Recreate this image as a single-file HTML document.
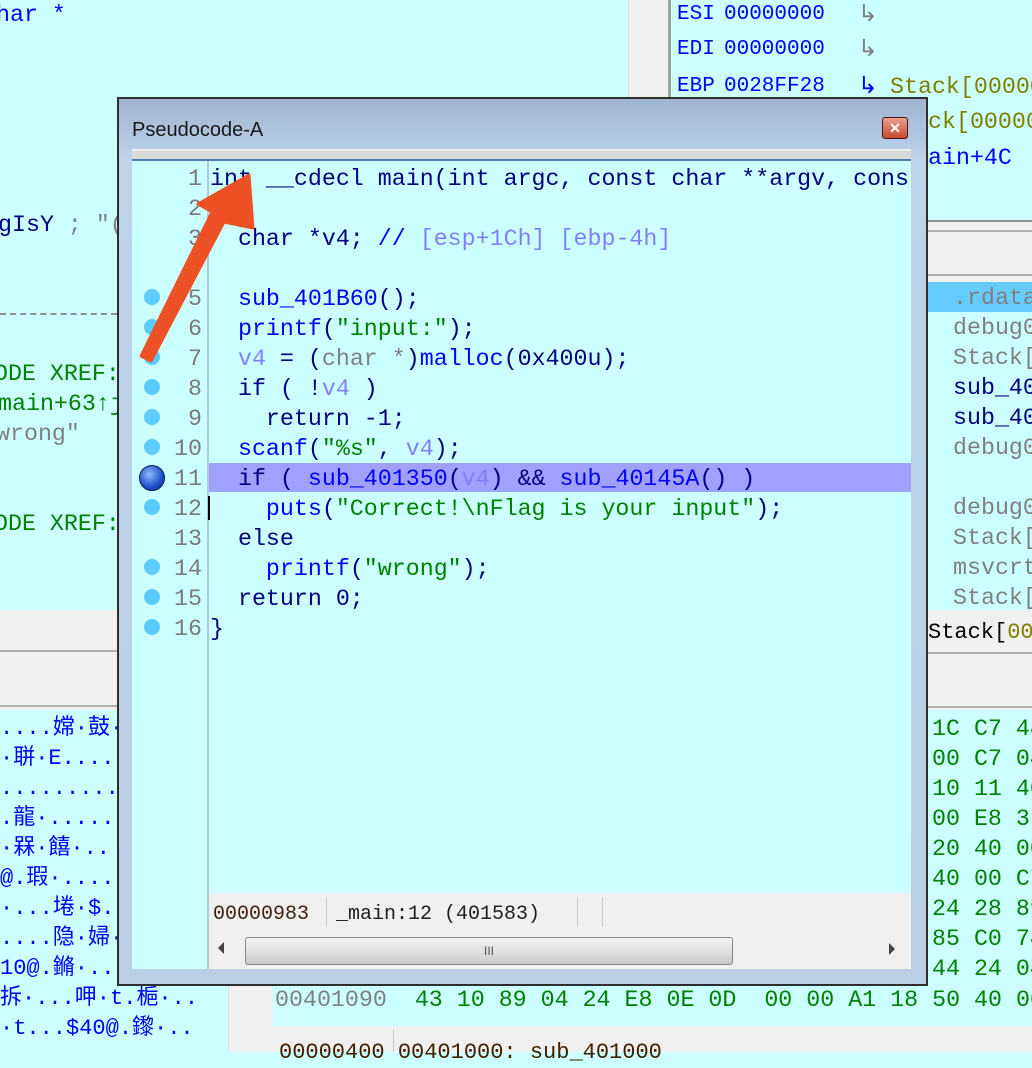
<!DOCTYPE html>
<html><head><meta charset="utf-8"><style>
*{margin:0;padding:0;box-sizing:border-box}
body{width:1032px;height:1052px;position:relative;overflow:hidden;background:#ccffff;font-family:"Liberation Mono","Noto Sans CJK SC",monospace;font-size:23.3px}
.a{position:absolute;white-space:pre;line-height:30px}
.b{position:absolute}
.nv{color:#000080}.bl{color:#0000ff}.gr{color:#008000}.gy{color:#808080}.pu{color:#8080ff}.ol{color:#808000}
.cn{color:#7a7a7a;text-align:right;width:70px}
.dot{position:absolute;width:16px;height:16px;border-radius:50%;background:#5ccbff;left:144px}
</style></head><body>
<div class="a bl" style="left:-4px;top:0">har *</div>
<div class="a" style="left:-2px;top:210px"><span class="nv">gIsY</span><span class="gy"> ; "(</span></div>
<div class="b" style="left:0;top:313px;width:117px;border-top:2px dashed #909090"></div>
<div class="a gr" style="left:-6px;top:359px">ODE XREF:</div>
<div class="a gr" style="left:-2px;top:389px">main+63↑j</div>
<div class="a gy" style="left:-4px;top:419px">wrong"</div>
<div class="a gr" style="left:-6px;top:509px">ODE XREF:</div>
<div class="b" style="left:0;top:610px;width:117px;height:100px;background:#f0f0f0"></div>
<div class="b" style="left:0;top:650px;width:117px;border-top:2px solid #b0b0b0"></div>
<div class="b" style="left:0;top:705px;width:117px;border-top:2px solid #b0b0b0"></div>
<div class="a bl" style="left:0;top:714px;font-size:22px">....嫦·鼓·
·聠·E....
.........伯
.龍·.....
·槑·饎·..
@.瑕·....
·...埢·$.
....隐·婦·
10@.鏅·..
拆·...呷·t.梔·..
·t...$40@.鑗·..</div>
<div class="b" style="left:628px;top:0;width:42px;height:230px;background:#f0f0f0;border-left:1px solid #ddd"></div>
<div class="b" style="left:668px;top:0;width:3px;height:230px;background:#a0a0a0"></div>
<div class="b" style="left:671px;top:0;width:361px;height:222px;background:#ccffff"></div>
<div class="a bl" style="left:677px;top:0;font-size:21px">ESI</div><div class="a bl" style="left:724px;top:0;font-size:21px">00000000</div><div class="a gy" style="left:858px;top:0">↳</div>
<div class="a bl" style="left:677px;top:35px;font-size:21px">EDI</div><div class="a bl" style="left:724px;top:35px;font-size:21px">00000000</div><div class="a gy" style="left:858px;top:35px">↳</div>
<div class="a bl" style="left:677px;top:72px;font-size:21px">EBP</div><div class="a bl" style="left:724px;top:72px;font-size:21px">0028FF28</div><div class="a bl" style="left:858px;top:72px">↳</div><div class="a ol" style="left:890px;top:72px">Stack[00000</div>
<div class="a ol" style="left:928px;top:107px">ck[00000</div>
<div class="a bl" style="left:928px;top:143px">ain+4C</div>
<div class="b" style="left:928px;top:220px;width:104px;height:62px;background:#f0f0f0;border-top:2px solid #909090"></div>
<div class="b" style="left:928px;top:230px;width:104px;border-top:2px solid #b0b0b0"></div>
<div class="b" style="left:928px;top:274px;width:104px;border-top:2px solid #b0b0b0"></div>
<div class="b" style="left:928px;top:282px;width:104px;height:30px;background:#66ccff"></div>
<div class="a gy" style="left:953px;top:283px">.rdata
debug0
Stack[
<span class="nv">sub_40</span>
<span class="nv">sub_40</span>
debug0

debug0
Stack[
msvcrt
Stack[</div>
<div class="b" style="left:928px;top:610px;width:104px;height:100px;background:#f0f0f0"></div>
<div class="a" style="left:928px;top:618px;font-size:22px;color:#000">Stack[<span style="color:#808000">00</span></div>
<div class="b" style="left:928px;top:652px;width:104px;border-top:2px solid #b0b0b0"></div>
<div class="b" style="left:928px;top:706px;width:104px;border-top:2px solid #b0b0b0"></div>
<div class="a gr" style="left:932px;top:714px">1C C7 44
00 C7 04
10 11 40
00 E8 3
20 40 00
40 00 C7
24 28 89
85 C0 74
44 24 04</div>
<div class="b" style="left:228px;top:985px;width:45px;height:67px;background:#f0f0f0;border-left:1px solid #ddd"></div>
<div class="a" style="left:275px;top:985px"><span class="gy">00401090</span>  <span class="gr">43 10 89 04 24 E8 0E 0D  00 00 A1 18 50 40 00</span></div>
<div class="b" style="left:273px;top:1026px;width:759px;height:26px;background:#f0f0f0"></div>
<div class="b" style="left:393px;top:1030px;width:1px;height:22px;background:#ccc"></div>
<div class="a" style="left:279px;top:1038px;color:#402000;font-size:22px">00000400 00401000: sub_401000</div>

<div class="b" style="left:117px;top:97px;width:811px;height:889px;background:linear-gradient(#9db3d0,#bcd3ea 60px,#b8cfe6);border:2px solid #2e2e2e"></div>
<div class="a" style="left:132px;top:115px;font-family:'Liberation Sans',sans-serif;font-size:20px;color:#1a1a1a">Pseudocode-A</div>
<div class="b" style="left:882px;top:117px;width:26px;height:22px;background:linear-gradient(#e8a090,#c84a30);border:1px solid #4a1a1a;border-radius:3px;color:#fff;font:bold 14px 'Liberation Sans',sans-serif;text-align:center;line-height:20px">✕</div>
<div class="b" style="left:132px;top:149px;width:779px;height:12px;background:#d8d8d8;border-top:2px solid #eee;border-bottom:2px solid #4a7fb0"></div>
<div class="b" style="left:132px;top:161px;width:75px;height:808px;background:#ccffff"></div>
<div class="b" style="left:207px;top:161px;width:2px;height:808px;background:#b0c8e0"></div>
<div class="b" style="left:209px;top:161px;width:702px;height:732px;background:#ccffff"></div>
<div class="b" style="left:209px;top:463px;width:702px;height:29px;background:#a0a0ff"></div>
<div class="a cn" style="left:132px;top:164px">1
2
3

5
6
7
8
9
10
11
12
13
14
15
16</div>
<div class="dot" style="top:289px"></div><div class="dot" style="top:319px"></div><div class="dot" style="top:349px"></div><div class="dot" style="top:379px"></div><div class="dot" style="top:409px"></div><div class="dot" style="top:439px"></div>
<div class="b" style="left:139px;top:465px;width:26px;height:26px;border-radius:50%;background:radial-gradient(circle at 40% 35%,#8fb8ff,#1b50c8 60%,#0a2a70);border:1px solid #0a2050"></div>
<div class="dot" style="top:499px"></div><div class="dot" style="top:559px"></div><div class="dot" style="top:589px"></div><div class="dot" style="top:619px"></div>
<div class="b" style="left:208px;top:496px;width:2px;height:24px;background:#000"></div>
<div class="a nv" style="left:210px;top:164px;width:700px;overflow:hidden">int __cdecl main(int argc, const char **argv, const
{
  char *v4; <span class="bl">//</span> <span class="pu">[esp+1Ch] [ebp-4h]</span>

  <span class="bl">sub_401B60</span>();
  <span class="bl">printf</span>(<span class="gr">"input:"</span>);
  <span class="pu">v4</span> = (<span class="gy">char *</span>)<span class="bl">malloc</span>(0x400u);
  if ( !<span class="pu">v4</span> )
    return -1;
  <span class="bl">scanf</span>(<span class="gr">"%s"</span>, <span class="pu">v4</span>);
  if ( <span class="bl">sub_401350</span>(<span class="pu">v4</span>) &amp;&amp; <span class="bl">sub_40145A</span>() )
    <span class="bl">puts</span>(<span class="gr">"Correct!\nFlag is your input"</span>);
  else
    <span class="bl">printf</span>(<span class="gr">"wrong"</span>);
  return 0;
}</div>
<div class="b" style="left:209px;top:893px;width:702px;height:76px;background:#f0f0f0"></div>
<div class="a" style="left:213px;top:900px;font-size:20px;color:#402010">00000983</div>
<div class="b" style="left:326px;top:897px;width:1px;height:30px;background:#ccc"></div>
<div class="a" style="left:336px;top:900px;font-size:20px;color:#202020">_main:12 (401583)</div>
<div class="b" style="left:577px;top:897px;width:1px;height:30px;background:#ccc"></div>
<div class="b" style="left:602px;top:897px;width:1px;height:30px;background:#ccc"></div>
<div class="b" style="left:218px;top:942px;width:0;height:0;border:6px solid transparent;border-right-color:#444;border-left:0"></div>
<div class="b" style="left:245px;top:937px;width:488px;height:28px;background:linear-gradient(#f4f4f4,#dcdcdc 60%,#c8c8c8);border:1px solid #888;border-radius:3px;text-align:center;font:12px 'Liberation Sans',sans-serif;line-height:26px;color:#555">III</div>
<div class="b" style="left:889px;top:943px;width:0;height:0;border:6px solid transparent;border-left-color:#444;border-right:0"></div>
<svg class="b" style="left:0;top:0" width="1032" height="1052"><path d="M141 356 L151 361 L224 222 L253 228 L249 175 L198 204 L212 212 Z" fill="#ed5125" stroke="#ed5125" stroke-width="3" stroke-linejoin="round"/></svg>
</body></html>
